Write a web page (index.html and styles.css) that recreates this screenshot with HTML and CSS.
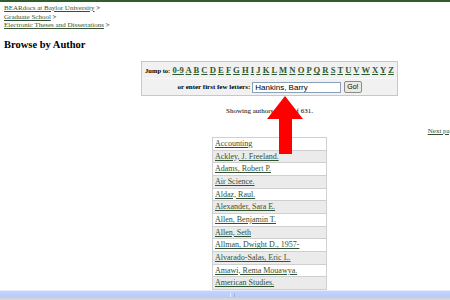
FILE: index.html
```html
<!DOCTYPE html>
<html lang="en">
<head>
    <meta charset="UTF-8">
    <title>Browse by Author</title>
    <link rel="stylesheet" href="styles.css">
</head>
<body>

<div class="page">
    <div class="crumbs">
        <a href="#">BEARdocs at Baylor University</a> &gt;<br>
        <a href="#">Graduate School</a> &gt;<br>
        <a href="#">Electronic Theses and Dissertations</a> &gt;
    </div>

    <h1>Browse by Author</h1>

    <form class="jump">
        <div class="letters">
            <b class="small">Jump to:</b>
            <a href="#">0-9</a> <a href="#">A</a> <a href="#">B</a> <a href="#">C</a> <a href="#">D</a> <a href="#">E</a> <a href="#">F</a> <a href="#">G</a> <a href="#">H</a> <a href="#">I</a> <a href="#">J</a> <a href="#">K</a> <a href="#">L</a> <a href="#">M</a> <a href="#">N</a> <a href="#">O</a> <a href="#">P</a> <a href="#">Q</a> <a href="#">R</a> <a href="#">S</a> <a href="#">T</a> <a href="#">U</a> <a href="#">V</a> <a href="#">W</a> <a href="#">X</a> <a href="#">Y</a> <a href="#">Z</a>
        </div>
        <div class="enter">
            <b class="small">or enter first few letters:</b>
            <input type="text" value="Hankins, Barry">
            <button type="button">Go!</button>
        </div>
    </form>

    <p class="showing">Showing authors 1 - 20 of 631.</p>

    <div class="pager"><a href="#">Next page &gt;</a></div>

    <div class="authors">
        <div class="row"><a href="#">Accounting</a></div>
        <div class="row"><a href="#">Ackley, J. Freeland.</a></div>
        <div class="row"><a href="#">Adams, Robert P.</a></div>
        <div class="row"><a href="#">Air Science.</a></div>
        <div class="row"><a href="#">Aldaz, Raul.</a></div>
        <div class="row"><a href="#">Alexander, Sara E.</a></div>
        <div class="row"><a href="#">Allen, Benjamin T.</a></div>
        <div class="row"><a href="#">Allen, Seth</a></div>
        <div class="row"><a href="#">Allman, Dwight D., 1957-</a></div>
        <div class="row"><a href="#">Alvarado-Salas, Eric L.</a></div>
        <div class="row"><a href="#">Amawi, Rema Mouawya.</a></div>
        <div class="row"><a href="#">American Studies.</a></div>
        <div class="row"><a href="#">Anderson, Ann.</a></div>
    </div>

    <svg class="arrow" width="38" height="58" viewBox="0 0 38 58">
        <polygon points="19,0 37,23 26,23 26,58 13,58 13,23 1,23" fill="#ff0000"/>
    </svg>
</div>

<div class="hscroll"><span class="grip"></span></div>

</body>
</html>
```

FILE: styles.css
```css
html, body {
    margin: 0;
    padding: 0;
    overflow: hidden;
    background: #fff;
}

body {
    border-top: 2px solid #2f5d2f;
    font-family: "Liberation Serif", "Times New Roman", serif;
    color: #000;
}

.page {
    position: relative;
    width: 539px;
    height: 298px;
}

a {
    color: #335233;
}

.crumbs {
    padding: 2px 4px 0;
    font-size: 7px;
    line-height: 8.5px;
}

h1 {
    margin: 9.5px 4px 0;
    font-size: 10.5px;
    line-height: 12px;
}

.jump {
    width: 255px;
    margin: 10px auto 0;
    border: 1px solid #c8c8c8;
    background: #f1f1f1;
}

.letters {
    height: 16px;
    line-height: 16px;
    text-align: center;
    font-size: 8.6px;
    font-weight: bold;
    white-space: nowrap;
    border-bottom: 1px solid #fafafa;
}

.letters a {
    color: #2d5a2d;
}

.small {
    font-size: 6.5px;
}

.enter {
    display: flex;
    align-items: center;
    justify-content: center;
    gap: 2px;
    height: 16px;
}

.enter .small {
    font-size: 7px;
}

.enter input {
    width: 89px;
    height: 11px;
    box-sizing: border-box;
    margin: 0;
    padding: 0 2px;
    border: 1px solid #8aa0b8;
    font-family: "Liberation Sans", Arial, sans-serif;
    font-size: 8px;
    background: #fff;
}

.enter button {
    height: 12px;
    margin: 0 0 0 1px;
    padding: 0 2px;
    border: 1px solid #8a8a8a;
    border-radius: 2px;
    background: #ece9e2;
    font-family: "Liberation Sans", Arial, sans-serif;
    font-size: 7px;
    line-height: 10px;
}

.showing {
    margin: 11px 0 0;
    text-align: center;
    font-size: 7px;
    line-height: 8.5px;
}

.pager {
    display: flex;
    justify-content: flex-end;
    padding-right: 77px;
    margin-top: 11px;
    font-size: 7px;
    line-height: 8.5px;
}

.authors {
    width: 115px;
    margin: 2px auto 0;
    border: 1px solid #cfcfcf;
    border-top: 0;
    box-sizing: border-box;
}

.row {
    height: 12.67px;
    box-sizing: border-box;
    border-top: 1px solid #cfcfcf;
    padding: 0 2px;
    font-size: 8px;
    line-height: 11.5px;
    white-space: nowrap;
}

.row:nth-child(even) {
    background: #ebebeb;
}

.arrow {
    position: absolute;
    left: 266px;
    top: 94px;
}

.hscroll {
    position: fixed;
    left: 0;
    right: 0;
    bottom: 0;
    height: 10px;
    box-sizing: border-box;
    border-top: 1px solid #e6ecfb;
    border-bottom: 2px solid #d4d6dc;
    background: linear-gradient(#c4d4fb, #b6cbf8);
}

.grip {
    display: block;
    width: 3px;
    height: 4px;
    margin: 2px 0 0 230px;
    border-left: 1px solid #e8eefe;
    border-right: 1px solid #9fb5e6;
}
```
